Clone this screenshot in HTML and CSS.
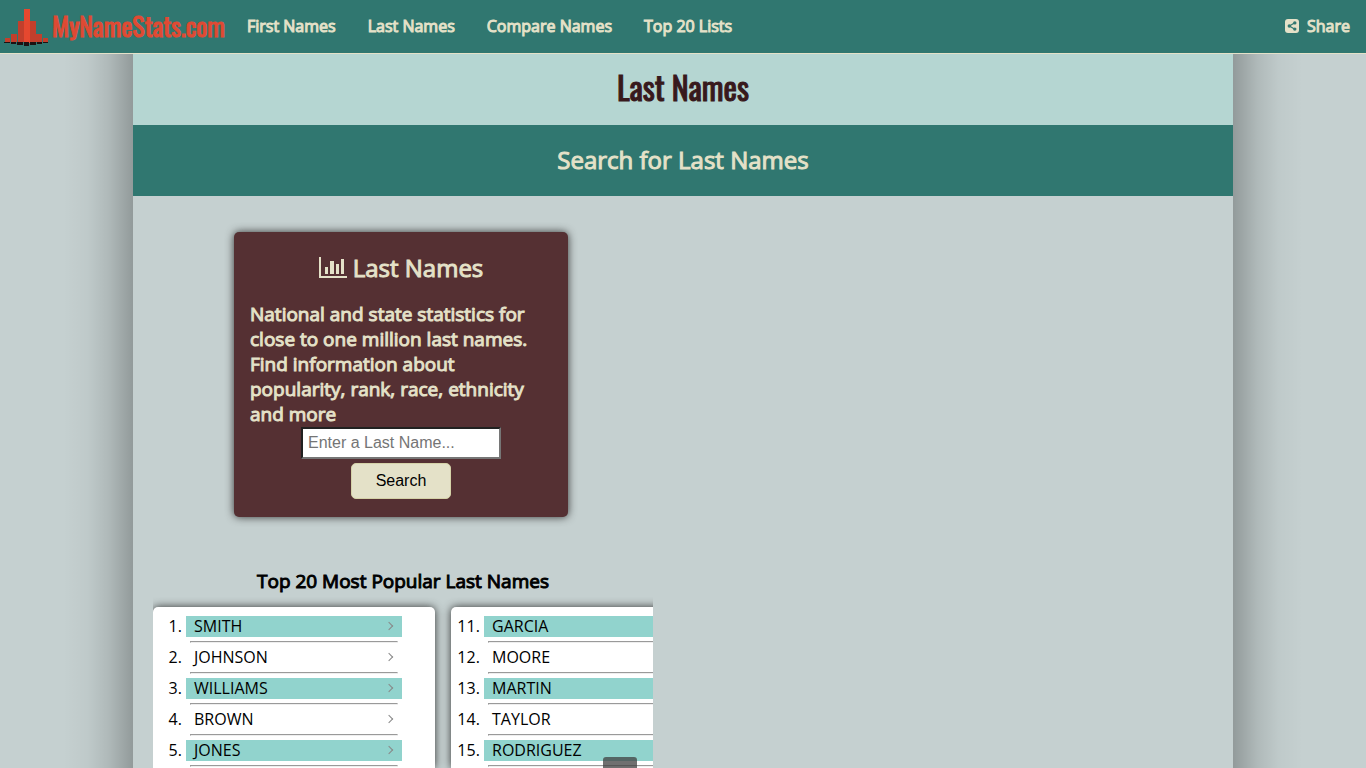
FILE: index.html
```html
<!DOCTYPE html>
<html lang="en">
<head>
<meta charset="UTF-8">
<meta name="viewport" content="width=device-width, initial-scale=1">
<title>Last Names</title>
<link rel="stylesheet" href="styles.css">
</head>
<body>
    <header class="topnav">
        <a href="#" class="logo">
            <svg class="logo-icon" viewBox="0 0 46 40" aria-hidden="true">
                <path fill="#c23f2c" d="M1 32h5v4H1zM7 28h6v8H7zM14 15h6v21h-6zM26 15h6v21h-6zM32 28h6v8h-6zM39 32h5v4h-5z"/>
                <path fill="#e5482f" d="M20 3h6v34h-6z"/>
                <path fill="#1c1212" d="M0 36h6v1H0zM7 36h5v2H7zM13 36h6v3h-6zM20 36h5v4h-5zM26 36h6v3h-6zM33 36h5v2h-5zM39 36h5v1h-5z"/>
            </svg>
            <span>MyNameStats.com</span>
        </a>
        <nav class="menu">
            <a href="#">First Names</a>
            <a href="#">Last Names</a>
            <a href="#">Compare Names</a>
            <a href="#">Top 20 Lists</a>
        </nav>
        <a href="#" class="share">
            <svg class="share-icon" viewBox="0 0 14 14" aria-hidden="true">
                <rect width="14" height="14" rx="3" fill="#e4e1c8"/>
                <path d="M9.8 3.8L4.4 7l5.4 3.2" fill="none" stroke="#307770" stroke-width="1.2"/>
                <circle cx="9.8" cy="3.9" r="1.7" fill="#307770"/>
                <circle cx="4.3" cy="7" r="1.7" fill="#307770"/>
                <circle cx="9.8" cy="10.1" r="1.7" fill="#307770"/>
            </svg>
            Share
        </a>
    </header>

    <main class="container">
        <h1>Last Names</h1>
        <h2 class="banner">Search for Last Names</h2>

        <div class="content">
            <form class="card">
                <h2>
                    <svg class="chart-icon" viewBox="0 0 28 22" aria-hidden="true">
                        <path fill="#e4e1c8" d="M0 0h2v19h26v2H0zM6 10h3v7H6zM11 4h4v13h-4zM17 7h3v10h-3zM22 2h3v15h-3z"/>
                    </svg>
                    Last Names
                </h2>
                <p>National and state statistics for close to one million last names. Find information about popularity, rank, race, ethnicity and more</p>
                <input type="text" placeholder="Enter a Last Name..." aria-label="Last name">
                <button type="submit">Search</button>
            </form>

            <h3>Top 20 Most Popular Last Names</h3>
            <div class="slider">
                <ol class="names">
                    <li><a href="#">SMITH <span class="arrow"></span></a><hr></li>
                    <li><a href="#">JOHNSON <span class="arrow"></span></a><hr></li>
                    <li><a href="#">WILLIAMS <span class="arrow"></span></a><hr></li>
                    <li><a href="#">BROWN <span class="arrow"></span></a><hr></li>
                    <li><a href="#">JONES <span class="arrow"></span></a><hr></li>
                </ol>
                <ol class="names" start="11">
                    <li><a href="#">GARCIA</a><hr></li>
                    <li><a href="#">MOORE</a><hr></li>
                    <li><a href="#">MARTIN</a><hr></li>
                    <li><a href="#">TAYLOR</a><hr></li>
                    <li><a href="#">RODRIGUEZ</a><hr></li>
                </ol>
                <button type="button" class="slide-btn" aria-label="Next"></button>
            </div>
        </div>
    </main>
</body>
</html>
```

FILE: styles.css
```css
* {
    box-sizing: border-box;
}
body {
    margin: 0;
    height: 100vh;
    overflow: hidden;
    background-color: #c5d0d0;
    /* soft shade on both sides of the page column */
    background-image:
        linear-gradient(to right, rgba(0, 0, 0, 0), rgba(0, 0, 0, 0.03) 35%, rgba(0, 0, 0, 0.11) 65%, rgba(0, 0, 0, 0.26)),
        linear-gradient(to left, rgba(0, 0, 0, 0), rgba(0, 0, 0, 0.03) 35%, rgba(0, 0, 0, 0.11) 65%, rgba(0, 0, 0, 0.26));
    background-repeat: no-repeat;
    background-size: 70px 100%;
    background-position: left calc(50vw - 620px) top 0, right calc(50vw - 620px) top 0;
    font-family: "Open Sans", sans-serif;
    font-size: 16px;
    color: #000;
}
a {
    color: inherit;
    text-decoration: none;
}

/* Heavier strokes on the regular weight */
.topnav, h1, h2, h3, .card p {
    font-weight: 400;
    -webkit-text-stroke: 1px currentColor;
}

/* Top navigation */
.topnav {
    position: fixed;
    top: 0;
    left: 0;
    right: 0;
    z-index: 10;
    height: 54px;
    display: flex;
    align-items: center;
    padding: 0 16px 2px 4px;
    background-color: #307770;
    border-bottom: 1px solid #e4e1c8;
    color: #e4e1c8;
}
.logo {
    display: flex;
    align-items: center;
    gap: 2px;
    font-family: Oswald, "Liberation Sans Narrow", sans-serif;
    font-size: 26px;
    line-height: 40px;
    color: #e04a33;
}
.logo-icon {
    width: 46px;
    height: 40px;
}
.menu {
    display: flex;
    gap: 32px;
    margin-left: 22px;
}
.share {
    display: flex;
    align-items: center;
    gap: 8px;
    margin-left: auto;
}
.share-icon {
    width: 14px;
    height: 14px;
}

/* Page column */
.container {
    max-width: 1100px;
    height: 100vh;
    margin: 0 auto;
    padding-top: 54px;
    background-color: #c5d0d0;
}
h1, h2, h3, p {
    margin: 0;
}
h1 {
    padding: 9px 0 14px;
    background-color: #b5d6d2;
    color: #38191c;
    font-family: Oswald, "Liberation Sans Narrow", sans-serif;
    font-size: 32px;
    line-height: 48px;
    text-align: center;
}
.banner {
    padding: 17px 0 18px;
    background-color: #307770;
    color: #e4e1c8;
    font-size: 24px;
    line-height: 36px;
    text-align: center;
}
.content {
    display: flex;
    flex-direction: column;
    max-width: 500px;
    height: calc(100vh - 196px);
    margin-left: 20px;
}

/* Search card */
.card {
    display: flex;
    flex-direction: column;
    align-items: center;
    width: 334px;
    margin: 36px 0 0 81px;
    padding: 18px 16px;
    border-radius: 5px;
    background-color: #553033;
    box-shadow: 0 0 8px #333;
    color: #e4e1c8;
}
.card h2 {
    display: flex;
    align-items: center;
    gap: 6px;
    font-size: 24px;
    line-height: 36px;
}
.chart-icon {
    width: 28px;
    height: 22px;
}
.card p {
    margin-top: 16px;
    padding-right: 20px;
    font-size: 19px;
    line-height: 25px;
}
.card input {
    width: 200px;
    height: 32px;
    margin-bottom: 4px;
    padding: 1px 5px;
    border: 2px inset #767676;
    background-color: #fff;
    font-family: "Liberation Sans", Arial, sans-serif;
    font-size: 16px;
}
.card button {
    width: 100px;
    height: 36px;
    border: 1px solid #d5d2a8;
    border-radius: 5px;
    background-color: #e4e1c8;
    font-family: "Liberation Sans", Arial, sans-serif;
    font-size: 16px;
}

/* Popular names */
h3 {
    margin-top: 51px;
    font-size: 19px;
    line-height: 26px;
    text-align: center;
}
.slider {
    position: relative;
    display: flex;
    flex: 1;
    gap: 16px;
    min-height: 0;
    padding-top: 13px;
    overflow: hidden;
}
.names {
    flex: none;
    width: 282px;
    margin: 0;
    padding: 9px 33px 0;
    border-radius: 5px 5px 0 0;
    background-color: #fff;
    box-shadow: 0 0 8px #333;
    line-height: 21px;
}
.names a {
    display: flex;
    justify-content: space-between;
    align-items: center;
    height: 21px;
    padding: 0 10px 0 8px;
}
.names li:nth-child(odd) a {
    background-color: #91d3cd;
}
.names hr {
    margin: 4px;
}
.arrow {
    width: 6px;
    height: 6px;
    margin-bottom: 2px;
    border: solid #888;
    border-width: 1px 1px 0 0;
    transform: rotate(45deg);
}
.slide-btn {
    position: absolute;
    right: 16px;
    bottom: 0;
    width: 34px;
    height: 11px;
    padding: 0;
    border: none;
    border-radius: 3px 3px 0 0;
    background-color: rgba(64, 64, 64, 0.75);
}
```
